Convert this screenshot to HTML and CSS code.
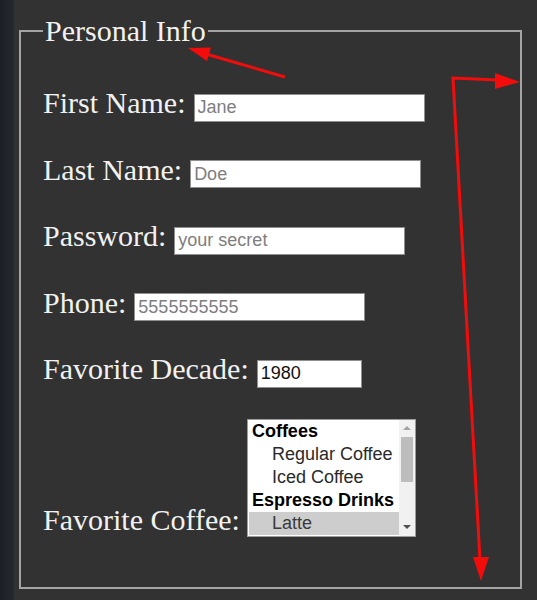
FILE: index.html
```html
<!DOCTYPE html>
<html lang="en">
<head>
<meta charset="utf-8">
<title>Personal Info</title>
<link rel="stylesheet" href="styles.css">
</head>
<body>
<div class="page">
  <div class="edge"></div>
  <main class="main">
    <fieldset class="info">
      <legend class="info-legend">Personal Info</legend>
      <div class="rows">
        <div class="row">
          <label class="label" for="fn">First Name:</label>
          <input class="field" id="fn" type="text" placeholder="Jane">
        </div>
        <div class="row">
          <label class="label" for="ln">Last Name:</label>
          <input class="field" id="ln" type="text" placeholder="Doe">
        </div>
        <div class="row">
          <label class="label" for="pw">Password:</label>
          <input class="field" id="pw" type="text" placeholder="your secret">
        </div>
        <div class="row">
          <label class="label" for="ph">Phone:</label>
          <input class="field" id="ph" type="text" placeholder="5555555555">
        </div>
        <div class="row">
          <label class="label" for="dc">Favorite Decade:</label>
          <input class="field field-short" id="dc" type="text" value="1980">
        </div>
        <div class="row row-end">
          <label class="label">Favorite Coffee:</label>
          <div class="listbox">
            <div class="options">
              <div class="group">Coffees</div>
              <div class="opt">Regular Coffee</div>
              <div class="opt">Iced Coffee</div>
              <div class="group">Espresso Drinks</div>
              <div class="opt opt-selected">Latte</div>
            </div>
            <div class="scrollbar">
              <div class="arrow arrow-up"></div>
              <div class="track"><div class="thumb"></div></div>
              <div class="arrow arrow-down"></div>
            </div>
          </div>
        </div>
      </div>
    </fieldset>
  </main>
</div>
<svg class="annot" width="537" height="600" viewBox="0 0 537 600">
  <line x1="285" y1="77" x2="206" y2="54" stroke="#f20c0c" stroke-width="3"/>
  <polygon points="188,48 211,47.6 207,61" fill="#f20c0c"/>
  <polyline points="497,80 453,78 480,560" fill="none" stroke="#f20c0c" stroke-width="3"/>
  <polygon points="520,82 495,73 495,89" fill="#f20c0c"/>
  <polygon points="481,581 473,557 489,557" fill="#f20c0c"/>
</svg>
</body>
</html>
```
FILE: styles.css
```css
html, body {
  margin: 0;
  padding: 0;
}
body {
  background: #323232;
  width: 537px;
  height: 600px;
  overflow: hidden;
  position: relative;
}
.page {
  display: flex;
  height: 600px;
}
.edge {
  width: 14px;
  flex: none;
  background: linear-gradient(to right, #1c2026, #262a2f);
}
.main {
  padding-left: 5px;
  padding-top: 14px;
}
.info {
  box-sizing: border-box;
  width: 503px;
  margin: 0;
  border: 2px solid #a4a4a4;
  padding: 38px 0 50px 22px;
  font-family: "Liberation Serif", "Times New Roman", serif;
  color: #f1f1f1;
}
.info-legend {
  font-size: 30px;
  padding: 0 2px;
  line-height: normal;
}
.rows {
  display: flex;
  flex-direction: column;
  gap: 31px;
}
.row {
  display: flex;
  align-items: baseline;
  gap: 8px;
}
.row-end {
  align-items: flex-end;
  gap: 7px;
}
.label {
  font-size: 30px;
  line-height: normal;
}
.field {
  box-sizing: border-box;
  width: 231px;
  height: 28px;
  margin: 0;
  border: 1px solid #8f8f8f;
  padding: 1px 3px;
  background: #fff;
  font-family: "Liberation Sans", Arial, sans-serif;
  font-size: 18px;
  color: #111;
  outline: none;
}
.field::placeholder {
  color: #7e7e7e;
}
.field-short {
  width: 105px;
}
.listbox {
  box-sizing: border-box;
  width: 169px;
  height: 118px;
  border: 1px solid #9c9c9c;
  background: #fff;
  display: flex;
  overflow: hidden;
  font-family: "Liberation Sans", Arial, sans-serif;
  font-size: 18px;
  color: #2a2a2a;
}
.options {
  flex: 1;
  padding-left: 1px;
}
.group, .opt {
  height: 23px;
  line-height: 23px;
  white-space: nowrap;
}
.group {
  font-weight: bold;
  color: #000;
  padding-left: 3px;
}
.opt {
  padding-left: 23px;
}
.opt-selected {
  background: #cdcdcd;
  color: #3a3a3a;
}
.scrollbar {
  width: 16px;
  flex: none;
  background: #f1f1f1;
  display: flex;
  flex-direction: column;
  align-items: center;
}
.arrow {
  height: 17px;
  width: 16px;
  display: flex;
  align-items: center;
  justify-content: center;
}
.arrow::before {
  content: "";
  border-left: 4px solid transparent;
  border-right: 4px solid transparent;
}
.arrow-up::before {
  border-bottom: 4px solid #a3a3a3;
}
.arrow-down::before {
  border-top: 4px solid #505050;
}
.track {
  flex: 1;
  width: 100%;
  display: flex;
  justify-content: center;
}
.thumb {
  width: 12px;
  height: 45px;
  background: #bdbdbd;
}
.annot {
  position: absolute;
  left: 0;
  top: 0;
  pointer-events: none;
}
```
